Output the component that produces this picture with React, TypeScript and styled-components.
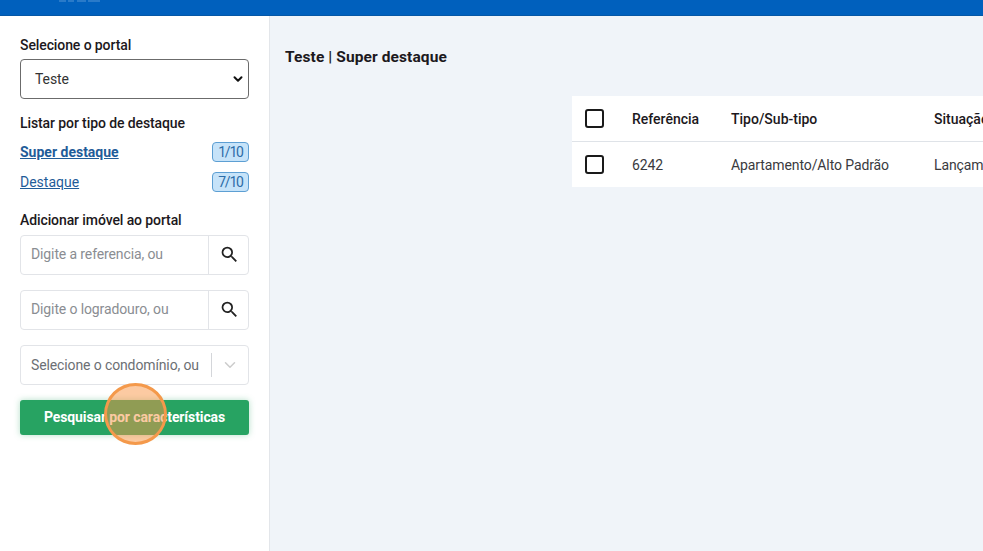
import React from "react";
import styled, { createGlobalStyle } from "styled-components";
import { ChevronDown } from "lucide-react";
import { MdSearch } from "react-icons/md";

const Global = createGlobalStyle`
  html, body { margin: 0; padding: 0; height: 100%; overflow: hidden; }
  body { font-family: Roboto, "Liberation Sans", sans-serif; background: #f0f4f9; color: #1c1820; }
  * { box-sizing: border-box; }
`;

const App = () => (
  <Page>
    <Global />
    <TopBar>
      <LogoTail width="41" height="3" viewBox="0 0 41 3">
        <path d="M0 1h7M9 1h6M18 1h9M29 1h12" stroke="#9cc4ec" strokeWidth="1.5" opacity="0.35" />
      </LogoTail>
    </TopBar>
    <Body>
      <Sidebar>
        <Label>Selecione o portal</Label>
        <PortalSelect>
          <span>Teste</span>
          <ChevronDown size={14} strokeWidth={3.4} color="#111" />
        </PortalSelect>
        <Label $top={16}>Listar por tipo de destaque</Label>
        <TypeRow $top={11}>
          <TypeLink $active>Super destaque</TypeLink>
          <Badge>1/10</Badge>
        </TypeRow>
        <TypeRow $top={10}>
          <TypeLink>Destaque</TypeLink>
          <Badge>7/10</Badge>
        </TypeRow>
        <Label $top={20}>Adicionar imóvel ao portal</Label>
        <Field $top={7}>
          <Placeholder>Digite a referencia, ou</Placeholder>
          <SearchButton>
            <MdSearch size={21} color="#222" />
          </SearchButton>
        </Field>
        <Field $top={15}>
          <Placeholder>Digite o logradouro, ou</Placeholder>
          <SearchButton>
            <MdSearch size={21} color="#222" />
          </SearchButton>
        </Field>
        <Field $top={15}>
          <Placeholder $dark>Selecione o condomínio, ou</Placeholder>
          <ComboArrow>
            <ChevronDown size={18} strokeWidth={2} color="#ccc" />
          </ComboArrow>
        </Field>
        <GreenButton>
          Pesquisar por características
          <ClickMark />
        </GreenButton>
      </Sidebar>
      <Content>
        <Heading>Teste | Super destaque</Heading>
        <Table>
          <HeadRow>
            <CheckCell><CheckBox /></CheckCell>
            <RefCell>Referência</RefCell>
            <TypeCell>Tipo/Sub-tipo</TypeCell>
            <StatusCell>Situação</StatusCell>
          </HeadRow>
          <DataRow>
            <CheckCell><CheckBox /></CheckCell>
            <RefCell>6242</RefCell>
            <TypeCell>Apartamento/Alto Padrão</TypeCell>
            <StatusCell>Lançamento</StatusCell>
          </DataRow>
        </Table>
      </Content>
    </Body>
  </Page>
);

export default App;

const Page = styled.div`
  width: 983px;
  height: 551px;
  overflow: hidden;
  display: flex;
  flex-direction: column;
`;

const TopBar = styled.header`
  height: 16px;
  flex: none;
  background: #0060bd;
  border-bottom: 1px solid #0557a6;
  padding-left: 59px;
`;

const LogoTail = styled.svg`
  display: block;
`;

const Body = styled.div`
  flex: 1;
  display: flex;
  min-height: 0;
`;

const Sidebar = styled.aside`
  width: 270px;
  flex: none;
  background: #fff;
  border-right: 1px solid #e3e6ea;
  padding: 21px 20px 0 20px;
  display: flex;
  flex-direction: column;
`;

const Label = styled.div<{ $top?: number }>`
  font-size: 14px;
  line-height: 16px;
  font-weight: 500;
  letter-spacing: -0.1px;
  color: #1c1820;
  margin-top: ${(p) => p.$top ?? 0}px;
`;

const PortalSelect = styled.div`
  margin-top: 6px;
  height: 40px;
  border: 1px solid #6b6b6b;
  border-radius: 4px;
  display: flex;
  align-items: center;
  justify-content: space-between;
  padding: 0 3px 0 14px;
  font-size: 14px;
  letter-spacing: -0.1px;
  color: #333;
`;

const TypeRow = styled.div<{ $top: number }>`
  margin-top: ${(p) => p.$top}px;
  display: flex;
  align-items: center;
  justify-content: space-between;
  height: 20px;
`;

const TypeLink = styled.a<{ $active?: boolean }>`
  font-size: 14px;
  font-weight: ${(p) => (p.$active ? 700 : 400)};
  color: #1f5c99;
  text-decoration: underline;
`;

const Badge = styled.span`
  height: 20px;
  width: 37px;
  display: flex;
  align-items: center;
  justify-content: center;
  font-size: 14px;
  letter-spacing: -1.2px;
  color: #2d6da8;
  background: #c6e3f9;
  border: 1px solid #5d9fd3;
  border-radius: 4px;
`;

const Field = styled.div<{ $top: number }>`
  margin-top: ${(p) => p.$top}px;
  height: 40px;
  display: flex;
  align-items: center;
  border: 1px solid #e2e4e8;
  border-radius: 4px;
  background: #fff;
`;

const Placeholder = styled.span<{ $dark?: boolean }>`
  flex: 1;
  padding-left: 10px;
  padding-bottom: ${(p) => (p.$dark ? 0 : 2)}px;
  font-size: 14px;
  letter-spacing: -0.12px;
  color: ${(p) => (p.$dark ? "#6c6f74" : "#8a8d92")};
  white-space: nowrap;
`;

const SearchButton = styled.div`
  width: 40px;
  height: 100%;
  flex: none;
  border-left: 1px solid #e2e4e8;
  display: flex;
  align-items: center;
  justify-content: center;
  padding: 0 0 2px 1px;
`;

const ComboArrow = styled.div`
  width: 37px;
  height: 24px;
  flex: none;
  border-left: 1px solid #d4d6da;
  display: flex;
  align-items: center;
  justify-content: center;
`;

const GreenButton = styled.button`
  position: relative;
  margin-top: 15px;
  height: 35px;
  width: 100%;
  border: none;
  border-radius: 3px;
  padding: 0 0 2px;
  background: #27a362;
  box-shadow: 0 0 6px rgba(39, 163, 98, 0.35);
  color: #fff;
  font-family: inherit;
  font-size: 14px;
  font-weight: 700;
  letter-spacing: -0.1px;
`;

const ClickMark = styled.span`
  position: absolute;
  left: 84px;
  top: -17px;
  width: 63px;
  height: 62px;
  border-radius: 50%;
  background: rgba(250, 150, 70, 0.5);
  border: 3px solid #f4994b;
`;

const Content = styled.main`
  flex: 1;
  min-width: 0;
  padding: 32px 0 0 15px;
  overflow: hidden;
`;

const Heading = styled.h1`
  margin: 0;
  font-size: 15.5px;
  line-height: 18px;
  font-weight: 700;
  letter-spacing: 0.1px;
  color: #1c1820;
`;

const Table = styled.div`
  margin: 30px 0 0 287px;
  width: 600px;
  background: #fff;
`;

const HeadRow = styled.div`
  height: 46px;
  display: flex;
  align-items: center;
  border-bottom: 1px solid #dfe3e8;
  font-size: 14px;
  font-weight: 500;
  color: #1c1820;
`;

const DataRow = styled.div`
  height: 45px;
  display: flex;
  align-items: center;
  font-size: 14px;
  letter-spacing: -0.1px;
  color: #3a3a3e;
`;

const CheckCell = styled.div`
  width: 60px;
  padding-left: 13px;
  flex: none;
`;

const CheckBox = styled.div`
  width: 19px;
  height: 19px;
  margin-top: -1px;
  border: 2.5px solid #1a1a1a;
  border-radius: 3px;
`;

const RefCell = styled.div`
  width: 99px;
  flex: none;
`;

const TypeCell = styled.div`
  width: 203px;
  flex: none;
`;

const StatusCell = styled.div`
  flex: 1;
  white-space: nowrap;
`;
